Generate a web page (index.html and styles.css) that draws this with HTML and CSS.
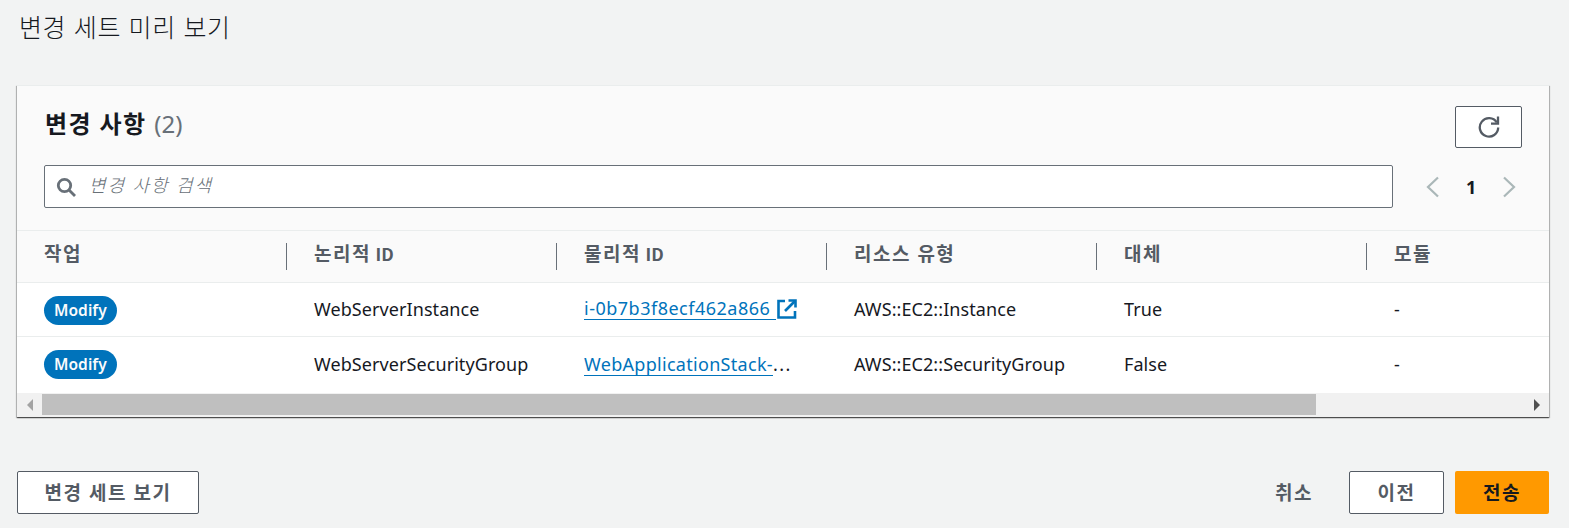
FILE: index.html
```html
<!DOCTYPE html>
<html lang="ko">
<head>
  <meta charset="UTF-8">
  <title>변경 세트 미리 보기</title>
  <link rel="stylesheet" href="styles.css">
</head>
<body>

  <h1 class="page-title">변경 세트 미리 보기</h1>

  <!-- Changes card -->
  <section class="card">
    <div class="card-head">
      <div class="head-row">
        <h2 class="card-title">변경 사항 <span class="count">(2)</span></h2>
        <button class="btn btn-refresh" aria-label="새로 고침">
          <svg width="22" height="22" viewBox="0 0 22 22" fill="none" stroke="#545b64" stroke-width="2.3">
            <path d="M18.8 6.5A9.2 9.2 0 1 0 20.2 11.5"/>
            <path d="M20 .6v7h-7"/>
          </svg>
        </button>
      </div>
      <div class="filter-row">
        <div class="search">
          <svg width="20" height="20" viewBox="0 0 20 20" fill="none" stroke="#687078" stroke-width="2.8">
            <circle cx="8.5" cy="8.5" r="6.2"/>
            <path d="M13 13l6 6"/>
          </svg>
          <span class="placeholder">변경 사항 검색</span>
        </div>
        <div class="pager">
          <svg width="16" height="22" viewBox="0 0 16 22" fill="none" stroke="#aab7b8" stroke-width="2.2"><path d="M13 1.5L3 11l10 9.5"/></svg>
          <span class="page-num">1</span>
          <svg width="16" height="22" viewBox="0 0 16 22" fill="none" stroke="#aab7b8" stroke-width="2.2"><path d="M3 1.5L13 11 3 20.5"/></svg>
        </div>
      </div>
    </div>

    <div class="table-row table-head">
      <div class="th">작업</div>
      <div class="th">논리적 <span class="th-id">ID</span></div>
      <div class="th">물리적 <span class="th-id">ID</span></div>
      <div class="th">리소스 유형</div>
      <div class="th">대체</div>
      <div class="th">모듈</div>
    </div>

    <div class="table-row body-row">
      <div class="td td-badge"><span class="badge">Modify</span></div>
      <div class="td">WebServerInstance</div>
      <div class="td">
        <a class="link link-id" href="#">i-0b7b3f8ecf462a866&nbsp;</a>
        <svg class="ext-icon" width="20" height="20" viewBox="0 0 20 20" fill="none" stroke="#0073bb" stroke-width="2.6">
          <path d="M8 2H1.5v16.5H18V12"/>
          <path d="M11.5 1.5h7v7"/>
          <path d="M18 2L8 12"/>
        </svg>
      </div>
      <div class="td">AWS::EC2::Instance</div>
      <div class="td">True</div>
      <div class="td">-</div>
    </div>

    <div class="table-row body-row row-last">
      <div class="td td-badge"><span class="badge">Modify</span></div>
      <div class="td">WebServerSecurityGroup</div>
      <div class="td"><a class="link" href="#">WebApplicationStack-</a><span class="ellipsis">...</span></div>
      <div class="td">AWS::EC2::SecurityGroup</div>
      <div class="td">False</div>
      <div class="td">-</div>
    </div>

    <!-- Horizontal scrollbar -->
    <div class="scrollbar">
      <span class="arrow arrow-left"></span>
      <div class="track"><div class="thumb"></div></div>
      <span class="arrow arrow-right"></span>
    </div>
  </section>

  <div class="actions">
    <button class="btn btn-view">변경 세트 보기</button>
    <div class="actions-right">
      <button class="btn-text">취소</button>
      <button class="btn btn-prev">이전</button>
      <button class="btn btn-submit">전송</button>
    </div>
  </div>

</body>
</html>
```

FILE: styles.css
```css
* {
  box-sizing: border-box;
}

body {
  margin: 0;
  height: 528px;
  overflow: hidden;
  padding: 0 20px 0 17px;
  background-color: #f2f3f3;
  color: #16191f;
  font-family: 'Noto Sans', 'Noto Sans CJK KR', sans-serif;
  font-size: 18px;
}

.page-title {
  margin: 0;
  height: 85px;
  padding: 10px 0 0 2px;
  font-family: 'Noto Sans CJK KR', sans-serif;
  font-size: 25px;
  line-height: 32px;
  font-weight: 300;
  letter-spacing: 0.6px;
}

.card {
  width: 1532px;
  height: 332px;
  background-color: #fff;
  box-shadow: 0 1px 1px 0 rgba(0,0,0,0.5), 1px 1px 1px 0 rgba(0,0,0,0.2), -1px 1px 1px 0 rgba(0,0,0,0.2);
}

.card-head {
  height: 146px;
  padding: 20px 27px 0 27px;
  background-color: #fafafa;
  border-top: 1px solid #eaeded;
  border-bottom: 1px solid #eaeded;
}

.head-row {
  display: flex;
  justify-content: space-between;
  height: 59px;
}

.card-title {
  margin: 0;
  padding-left: 1px;
  font-size: 24px;
  line-height: 36px;
  font-weight: 700;
  letter-spacing: 1.4px;
}

.count {
  color: #687078;
  font-weight: 400;
  font-size: 24px;
  letter-spacing: 0;
}

.btn {
  border: 1px solid #545b64;
  border-radius: 2px;
  background-color: #fff;
  color: #545b64;
  font-family: inherit;
  font-size: 19px;
  font-weight: 700;
  letter-spacing: 1.5px;
}

.btn-refresh {
  width: 67px;
  height: 42px;
  display: flex;
  align-items: center;
  justify-content: center;
  padding: 0;
}

.filter-row {
  display: flex;
  align-items: center;
}

.search {
  width: 1349px;
  height: 43px;
  display: flex;
  align-items: center;
  gap: 13px;
  padding-left: 11px;
  background-color: #fff;
  border: 1px solid #687078;
  border-radius: 2px;
}

.placeholder {
  padding-bottom: 6px;
  color: #687078;
  font-style: italic;
  font-weight: 300;
  font-size: 18px;
  letter-spacing: 1.9px;
}

.pager {
  display: flex;
  align-items: center;
  gap: 25px;
  margin-left: 32px;
}

.page-num {
  width: 10px;
  font-weight: 700;
  text-align: center;
}

.table-row {
  display: grid;
  grid-template-columns: repeat(6, 270px);
  width: 1532px;
  overflow: hidden;
}

.table-head {
  height: 52px;
  align-items: center;
  background-color: #fafafa;
  border-bottom: 1px solid #eaeded;
}

.th {
  height: 27px;
  padding-left: 27px;
  border-right: 1px solid #687078;
  color: #545b64;
  font-size: 19px;
  font-weight: 700;
  line-height: 22px;
  letter-spacing: 1.5px;
}

.th:last-child {
  border-right: none;
}

.th-id {
  margin-left: -2px;
  font-family: 'Noto Sans CJK KR', sans-serif;
  font-size: 17.5px;
  letter-spacing: 0;
}

.body-row {
  height: 54px;
  align-items: center;
  border-bottom: 1px solid #eaeded;
}

.row-last {
  height: 56px;
  border-bottom: none;
}

.td {
  display: flex;
  align-items: center;
  padding-left: 27px;
  padding-bottom: 2px;
  line-height: 22px;
  letter-spacing: 0.08px;
  color: #16191f;
}

.td-badge {
  padding-top: 2px;
  padding-bottom: 0;
}

.row-last .td-badge {
  padding-top: 0;
  padding-bottom: 2px;
}

.badge {
  height: 29px;
  padding: 0 10px;
  border-radius: 15px;
  background-color: #0073bb;
  color: #fbfbfb;
  font-size: 15.5px;
  font-weight: 600;
  line-height: 29px;
}

.link {
  color: #0073bb;
  text-decoration: none;
  border-bottom: 1px solid #0073bb;
  letter-spacing: 0.3px;
}

.link-id {
  letter-spacing: 0.5px;
}

.ellipsis {
  letter-spacing: 1.5px;
}

.ext-icon {
  margin-left: 1px;
}

.scrollbar {
  height: 24px;
  display: flex;
  align-items: stretch;
  padding-top: 1px;
  background-color: #f1f1f1;
  border-bottom: 2px solid #f1f1f1;
}

.arrow {
  width: 25px;
  display: flex;
  align-items: center;
  justify-content: center;
}

.arrow::before {
  content: '';
  border-top: 6px solid transparent;
  border-bottom: 6px solid transparent;
}

.arrow-left::before {
  border-right: 6px solid #a3a3a3;
}

.arrow-right::before {
  border-left: 6px solid #505050;
}

.track {
  flex: 1;
  height: 21px;
}

.thumb {
  width: 1274px;
  height: 100%;
  background-color: #bfbfbf;
}

.actions {
  display: flex;
  justify-content: space-between;
  align-items: center;
  width: 1532px;
  margin-top: 54px;
}

.actions .btn {
  height: 43px;
  padding-bottom: 3px;
}

.btn-view {
  width: 182px;
}

.actions-right {
  display: flex;
  align-items: center;
}

.btn-text {
  width: 80px;
  margin-right: 15px;
  padding-bottom: 3px;
  border: none;
  background: none;
  color: #545b64;
  font-family: inherit;
  font-size: 19px;
  font-weight: 700;
  letter-spacing: 1.5px;
}

.btn-prev {
  width: 95px;
  margin-right: 11px;
}

.actions .btn-submit {
  width: 94px;
  border: none;
  background-color: #ff9900;
  color: #16191f;
}
```
